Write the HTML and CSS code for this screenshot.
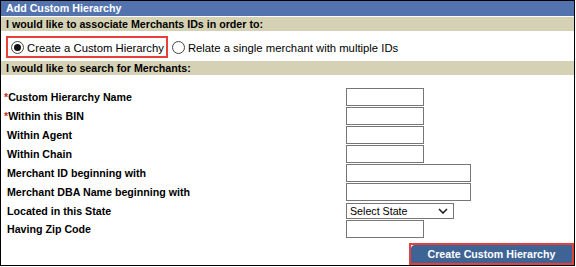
FILE: index.html
```
<!DOCTYPE html>
<html>
<head>
<meta charset="utf-8">
<link rel="stylesheet" href="styles.css">
</head>
<body>
<div class="panel">
  <div class="title">Add Custom Hierarchy</div>
  <div class="section first">I would like to associate Merchants IDs in order to:</div>
  <div class="choices">
    <label class="choice highlight"><span class="radio checked"></span>Create a Custom Hierarchy</label>
    <label class="choice"><span class="radio"></span>Relate a single merchant with multiple IDs</label>
  </div>
  <div class="section">I would like to search for Merchants:</div>
  <div class="form">
    <div class="field"><span class="label"><span class="req">*</span>Custom Hierarchy Name</span><input class="input short" type="text"></div>
    <div class="field"><span class="label"><span class="req">*</span>Within this BIN</span><input class="input short" type="text"></div>
    <div class="field"><span class="label">&nbsp;Within Agent</span><input class="input short" type="text"></div>
    <div class="field"><span class="label">&nbsp;Within Chain</span><input class="input short" type="text"></div>
    <div class="field"><span class="label">&nbsp;Merchant ID beginning with</span><input class="input long" type="text"></div>
    <div class="field"><span class="label">&nbsp;Merchant DBA Name beginning with</span><input class="input long" type="text"></div>
    <div class="field compact"><span class="label">&nbsp;Located in this State</span><select class="select"><option>Select State</option></select></div>
    <div class="field"><span class="label">&nbsp;Having Zip Code</span><input class="input short" type="text"></div>
  </div>
  <div class="actions">
    <span class="highlight btn-box"><button class="btn" type="button">Create Custom Hierarchy</button></span>
  </div>
</div>
</body>
</html>
```
FILE: styles.css
```
html, body {
  margin: 0;
  padding: 0;
  background: #fff;
}
.panel {
  width: 575px;
  height: 266px;
  box-sizing: border-box;
  border: 1px solid #000;
  font-family: "Liberation Sans", Arial, sans-serif;
  font-size: 10.67px;
  font-weight: bold;
  color: #000;
  background: #fff;
}
.title {
  height: 15px;
  line-height: 15px;
  padding-left: 5px;
  background: #5373af;
  color: #fff;
}
.section {
  height: 14px;
  line-height: 14px;
  padding-left: 5px;
  background: #d5d1b4;
}
.section.first {
  margin-top: 1px;
}
.choices {
  display: flex;
  align-items: center;
  padding: 5px 0 3px 5px;
  font-weight: normal;
  font-size: 11.3px;
}
.choice {
  display: inline-flex;
  align-items: center;
  height: 22px;
  box-sizing: border-box;
  padding: 1px 2px 0 3px;
  gap: 3px;
  border: 2px solid transparent;
  margin-right: 1px;
}
.choice + .choice {
  padding-left: 1px;
}
.highlight {
  border: 2px solid #e5403c;
}
.radio {
  position: relative;
  width: 13px;
  height: 13px;
  box-sizing: border-box;
  border: 1px solid #444;
  border-radius: 50%;
  background: #fff;
  flex: none;
  margin-top: -1px;
}
.radio.checked::after {
  content: "";
  position: absolute;
  left: 2px;
  top: 2px;
  width: 7px;
  height: 7px;
  border-radius: 50%;
  background: #111;
}
.form {
  padding: 13px 0 0 3px;
}
.field {
  display: flex;
  height: 19px;
  line-height: 19px;
}
.field.compact {
  height: 18px;
  line-height: 18px;
}
.label {
  width: 342px;
  flex: none;
  white-space: pre;
}
.req {
  color: #c0302a;
}
.input {
  height: 18px;
  box-sizing: border-box;
  border: 1px solid #767676;
  padding: 0 2px;
  margin: 0;
  background: #fff;
  font: inherit;
}
.input.short {
  width: 78px;
}
.input.long {
  width: 125px;
}
.select {
  -webkit-appearance: none;
  appearance: none;
  width: 108px;
  height: 16px;
  margin: 1px 0 0 0;
  box-sizing: border-box;
  border: 1px solid #767676;
  border-radius: 0;
  padding: 0 0 0 3px;
  font-family: "Liberation Sans", Arial, sans-serif;
  font-size: 10.67px;
  font-weight: normal;
  color: #000;
  line-height: 14px;
  background: #fff url("data:image/svg+xml;utf8,<svg xmlns='http://www.w3.org/2000/svg' width='10' height='6' viewBox='0 0 10 6'><polyline points='1,1 5,5 9,1' fill='none' stroke='%23222' stroke-width='1.6'/></svg>") no-repeat right 5px center;
}
.actions {
  display: flex;
  justify-content: flex-end;
  margin-top: 4px;
}
.btn-box {
  display: flex;
  width: 165px;
  height: 22px;
  box-sizing: border-box;
}
.btn {
  flex: 1;
  height: 18px;
  margin: 0;
  padding: 0;
  border: none;
  border-radius: 4px 0 0 0;
  background: #3e6395;
  color: #fff;
  font-family: "Liberation Sans", Arial, sans-serif;
  font-size: 10.67px;
  font-weight: bold;
  line-height: 18px;
  text-align: center;
}
```
